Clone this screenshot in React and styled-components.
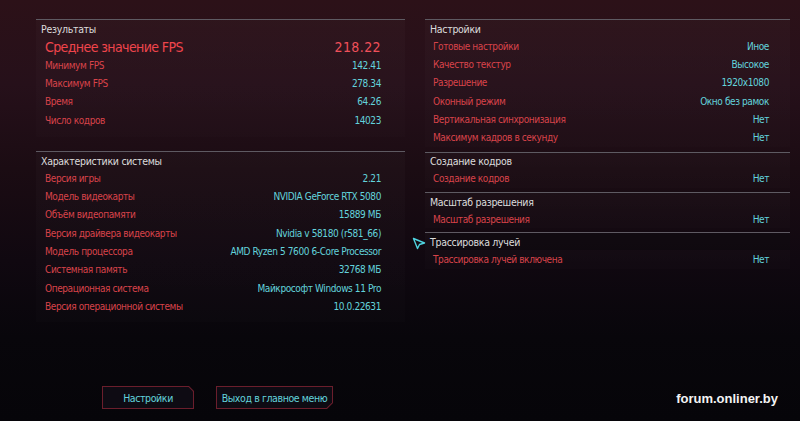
import React from "react";
import styled, { createGlobalStyle } from "styled-components";

const Global = createGlobalStyle`
  html, body { margin: 0; padding: 0; background: #060509; }
  #root { width: 800px; height: 421px; overflow: hidden; }
`;

const FONT = `"DejaVu Sans Condensed", "DejaVu Sans", Roboto, sans-serif`;

const Screen = styled.div`
  position: relative;
  width: 800px;
  height: 421px;
  display: flex;
  flex-direction: column;
  font-family: ${FONT};
  background: linear-gradient(180deg, #2c1118 0%, #26101a 20%, #1b0c13 40%, #100810 62%, #08060b 80%, #060509 100%);
  overflow: hidden;
`;

const Main = styled.div`
  display: flex;
  gap: 20px;
  padding: 19px 10px 0 36px;
`;

const Column = styled.div`
  width: ${(p) => p.$w}px;
  display: flex;
  flex-direction: column;
`;

const Panel = styled.section`
  margin-top: ${(p) => p.$mt || 0}px;
  border-top: 1px solid #5e5a62;
  background: linear-gradient(180deg, rgba(255,255,255,0.018), rgba(255,255,255,0.008));
  padding-left: ${(p) => p.$pl}px;
  padding-right: ${(p) => p.$pr}px;
  padding-bottom: ${(p) => p.$pb || 0}px;
`;

const Title = styled.div`
  height: ${(p) => p.$h || 17}px;
  display: flex;
  align-items: center;
  margin-left: -${(p) => p.$back}px;
  color: #dcdcdc;
  font-size: 10.5px;
  letter-spacing: -0.3px;
  ${(p) => p.$hl && `background: rgba(8,6,12,0.45); margin-right: -21px; padding-right: 21px;`}
`;

const Row = styled.div`
  height: ${(p) => p.$h || 18.3}px;
  display: flex;
  align-items: center;
  justify-content: space-between;
  white-space: nowrap;
  font-size: ${(p) => (p.$big ? 14 : 10)}px;
  letter-spacing: ${(p) => (p.$big ? "-0.6px" : "-0.4px")};
`;

const Label = styled.span`
  color: ${(p) => (p.$big ? "#f0454c" : "#d8434a")};
`;

const Value = styled.span`
  color: ${(p) => (p.$big ? "#f0505a" : "#63d3dc")};
  ${(p) => p.$big && "letter-spacing: 0.4px;"}
`;

const Footer = styled.div`
  margin-top: auto;
  display: flex;
  align-items: center;
  padding: 0 22px 12px 102px;
  gap: 22px;
`;

const BtnOuter = styled.div`
  width: ${(p) => p.$w}px;
  height: 23px;
  padding: 1px;
  box-sizing: border-box;
  background: #6b1e2c;
  clip-path: ${(p) =>
    p.$corner === "tr"
      ? "polygon(0 0, calc(100% - 5px) 0, 100% 5px, 100% 100%, 0 100%)"
      : "polygon(0 0, 100% 0, 100% calc(100% - 6px), calc(100% - 6px) 100%, 0 100%)"};
`;

const BtnInner = styled.div`
  width: 100%;
  height: 100%;
  display: flex;
  align-items: center;
  justify-content: center;
  white-space: nowrap;
  background: #0e0b13;
  color: #63d3dc;
  font-size: 10.5px;
  letter-spacing: -0.4px;
  clip-path: ${(p) =>
    p.$corner === "tr"
      ? "polygon(0 0, calc(100% - 4.5px) 0, 100% 4.5px, 100% 100%, 0 100%)"
      : "polygon(0 0, 100% 0, 100% calc(100% - 5.5px), calc(100% - 5.5px) 100%, 0 100%)"};
`;

const Watermark = styled.div`
  margin-left: auto;
  margin-bottom: -2px;
  font-family: "Liberation Sans", Arial, sans-serif;
  font-weight: bold;
  font-size: 13px;
  color: #f4f4f4;
`;

const Cursor = styled.svg`
  position: absolute;
  left: 412px;
  top: 237px;
`;

const results = [
  ["Минимум FPS", "142.41"],
  ["Максимум FPS", "278.34"],
  ["Время", "64.26"],
  ["Число кодров", "14023"],
];

const system = [
  ["Версия игры", "2.21"],
  ["Модель видеокарты", "NVIDIA GeForce RTX 5080"],
  ["Объём видеопамяти", "15889 МБ"],
  ["Версия драйвера видеокарты", "Nvidia v 58180 (r581_66)"],
  ["Модель процессора", "AMD Ryzen 5 7600 6-Core Processor"],
  ["Системная память", "32768 МБ"],
  ["Операционная система", "Майкрософт Windows 11 Pro"],
  ["Версия операционной системы", "10.0.22631"],
];

const settings = [
  ["Готовые настройки", "Иное"],
  ["Качество текстур", "Высокое"],
  ["Разрешение", "1920x1080"],
  ["Оконный режим", "Окно без рамок"],
  ["Вертикальная синхронизация", "Нет"],
  ["Максимум кадров в секунду", "Нет"],
];

const subs = [
  ["Создание кодров", "Создание кодров", "Нет"],
  ["Масштаб разрешения", "Масштаб разрешения", "Нет"],
  ["Трассировка лучей", "Трассировка лучей включена", "Нет"],
];

export default function App() {
  return (
    <>
      <Global />
      <Screen>
        <Main>
          <Column $w={369}>
            <Panel $pl={9} $pr={24} $pb={8}>
              <Title $back={4} $h={17}>Результаты</Title>
              <Row $big $h={19}>
                <Label $big>Среднее значение FPS</Label>
                <Value $big>218.22</Value>
              </Row>
              {results.map(([l, v]) => (
                <Row key={l}>
                  <Label>{l}</Label>
                  <Value>{v}</Value>
                </Row>
              ))}
            </Panel>
            <Panel $mt={14} $pl={9} $pr={24} $pb={6}>
              <Title $back={4} $h={17}>Характеристики системы</Title>
              {system.map(([l, v]) => (
                <Row key={l}>
                  <Label>{l}</Label>
                  <Value>{v}</Value>
                </Row>
              ))}
            </Panel>
          </Column>
          <Column $w={365}>
            <Panel $pl={8} $pr={21}>
              <Title $back={3} $h={17}>Настройки</Title>
              {settings.map(([l, v]) => (
                <Row key={l}>
                  <Label>{l}</Label>
                  <Value>{v}</Value>
                </Row>
              ))}
            </Panel>
            {subs.map(([t, l, v], i) => (
              <Panel key={t} $mt={i === 0 ? 5 : 4} $pl={8} $pr={21}>
                <Title $back={3} $h={17} $hl={i === 2}>{t}</Title>
                <Row>
                  <Label>{l}</Label>
                  <Value>{v}</Value>
                </Row>
              </Panel>
            ))}
          </Column>
        </Main>
        <Footer>
          <BtnOuter $w={92} $corner="tr">
            <BtnInner $corner="tr">Настройки</BtnInner>
          </BtnOuter>
          <BtnOuter $w={117} $corner="br">
            <BtnInner $corner="br">Выход в главное меню</BtnInner>
          </BtnOuter>
          <Watermark>forum.onliner.by</Watermark>
        </Footer>
        <Cursor width="14" height="13" viewBox="0 0 14 13">
          <path d="M1.5 1.5 L12.5 6 L7.5 7.5 L5.5 11.5 Z" fill="none" stroke="#4fd3df" strokeWidth="1.4" strokeLinejoin="round" />
        </Cursor>
      </Screen>
    </>
  );
}
